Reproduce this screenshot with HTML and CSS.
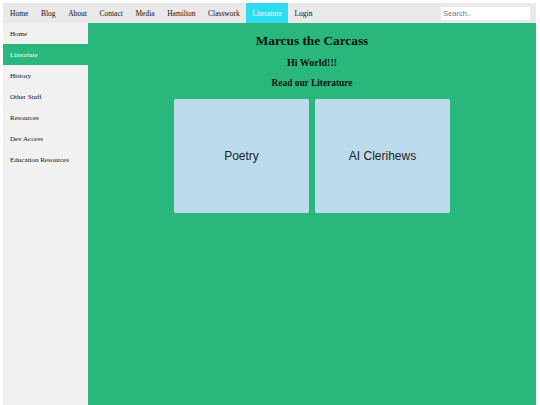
FILE: index.html
```html
<!DOCTYPE html>
<html>
<head>
<meta charset="utf-8">
<link rel="stylesheet" href="styles.css">
</head>
<body>
<nav class="topnav">
  <a class="nav-item">Home</a>
  <a class="nav-item">Blog</a>
  <a class="nav-item">About</a>
  <a class="nav-item">Contact</a>
  <a class="nav-item">Media</a>
  <a class="nav-item">Hamilton</a>
  <a class="nav-item">Classwork</a>
  <a class="nav-item active">Literature</a>
  <a class="nav-item">Login</a>
  <input class="search" type="text" placeholder="Search..">
</nav>
<div class="layout">
  <aside class="sidebar">
    <a class="side-item">Home</a>
    <a class="side-item active">Literature</a>
    <a class="side-item">History</a>
    <a class="side-item">Other Stuff</a>
    <a class="side-item">Resources</a>
    <a class="side-item">Dev Access</a>
    <a class="side-item">Education Resources</a>
  </aside>
  <main class="main">
    <h1 class="title">Marcus the Carcass</h1>
    <h2 class="sub">Hi World!!!</h2>
    <h3 class="sub2">Read our Literature</h3>
    <div class="cards">
      <div class="card">Poetry</div>
      <div class="card">AI Clerihews</div>
    </div>
  </main>
</div>
</body>
</html>
```
FILE: styles.css
```css
html, body {
  margin: 0;
  padding: 0;
  background: #ffffff;
}
body {
  margin: 3px 4px 0 3px;
  font-family: "Liberation Serif", "Times New Roman", serif;
  height: 402px;
  overflow: hidden;
  display: flex;
  flex-direction: column;
}
.topnav {
  display: flex;
  align-items: center;
  height: 20px;
  background: #e9e9e9;
  flex: none;
}
.nav-item {
  display: flex;
  align-items: center;
  height: 20px;
  padding: 0 6.3px;
  font-size: 7.5px;
  color: #111;
}
.nav-item:first-child {
  padding-left: 7px;
}
.nav-item.active {
  background: #2ddcee;
  color: #ffffff;
}
.search {
  margin-left: auto;
  margin-right: 6px;
  width: 89px;
  height: 13px;
  box-sizing: border-box;
  border: none;
  background: #ffffff;
  padding: 0 2px;
  font-family: "Liberation Sans", Arial, sans-serif;
  font-size: 7.6px;
  outline: none;
}
.search::placeholder {
  color: #777;
}
.layout {
  display: flex;
  flex: 1;
}
.sidebar {
  width: 85px;
  flex: none;
  background: #f1f1f1;
  display: flex;
  flex-direction: column;
}
.side-item {
  display: flex;
  align-items: center;
  height: 21px;
  padding-left: 7px;
  font-size: 7px;
  color: #111;
}
.side-item.active {
  background: #29b77b;
  color: #ffffff;
}
.main {
  flex: 1;
  background: #29b77b;
  display: flex;
  flex-direction: column;
  align-items: center;
  padding-top: 10px;
}
.title {
  margin: 0;
  font-size: 13.3px;
  line-height: 16px;
  color: #111;
}
.sub {
  margin: 8px 0 0 0;
  font-size: 10px;
  line-height: 12px;
  color: #111;
}
.sub2 {
  margin: 8px 0 0 0;
  font-size: 9.4px;
  line-height: 12px;
  color: #111;
}
.cards {
  display: flex;
  gap: 6px;
  margin-top: 10px;
}
.card {
  width: 135px;
  height: 114px;
  background: #bcdcee;
  border-radius: 2px;
  display: flex;
  align-items: center;
  justify-content: center;
  font-family: "Liberation Sans", Arial, sans-serif;
  font-size: 12px;
  color: #222;
}
```
